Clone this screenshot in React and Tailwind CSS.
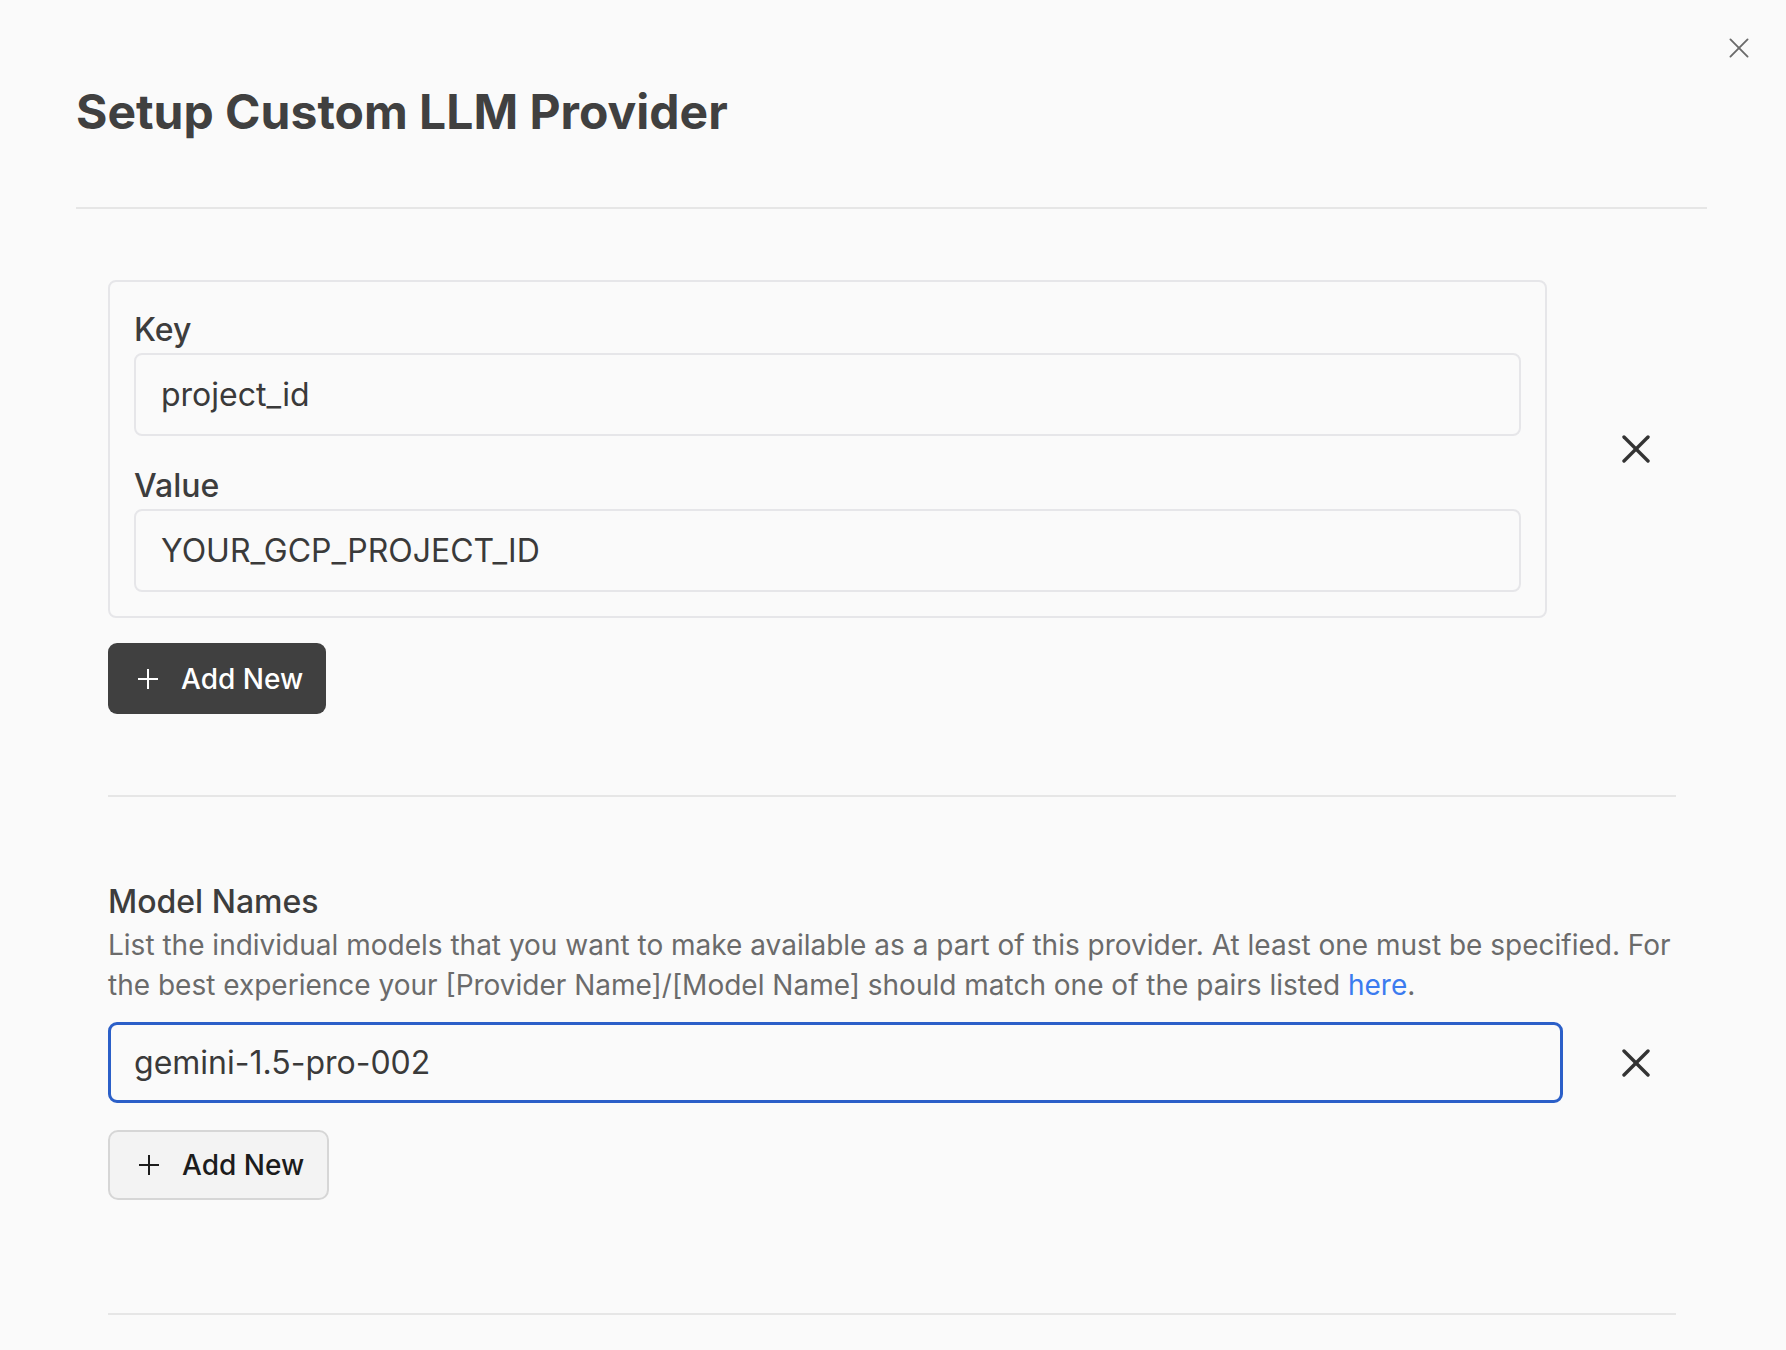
import React, { useState } from "react";

// Small X icon used for removing rows and closing the dialog
function CrossIcon({ size = 28, stroke = 3, className = "" }) {
  return (
    <svg width={size} height={size} viewBox="0 0 28 28" className={className} fill="none">
      <line x1="2" y1="2" x2="26" y2="26" stroke="currentColor" strokeWidth={stroke} strokeLinecap="round" />
      <line x1="26" y1="2" x2="2" y2="26" stroke="currentColor" strokeWidth={stroke} strokeLinecap="round" />
    </svg>
  );
}

function PlusIcon({ className = "" }) {
  return (
    <svg width="22" height="22" viewBox="0 0 22 22" className={className} fill="none">
      <line x1="11" y1="1" x2="11" y2="21" stroke="currentColor" strokeWidth="2" />
      <line x1="1" y1="11" x2="21" y2="11" stroke="currentColor" strokeWidth="2" />
    </svg>
  );
}

function Field({ label, value, className = "" }) {
  return (
    <div className={className}>
      <div className="text-[32px] leading-[40px] font-medium text-[#3d3d3d] mb-[3px]">{label}</div>
      <div className="h-[83px] border-2 border-[#e6e6e9] rounded-[8px] bg-[#fafafa] flex items-center pl-[25px] text-[32px] text-[#3a3a3a]">
        {value}
      </div>
    </div>
  );
}

export default function App() {
  const [pairs] = useState([{ key: "project_id", value: "YOUR_GCP_PROJECT_ID" }]);
  const [models] = useState(["gemini-1.5-pro-002"]);

  return (
    <div
      className="relative min-h-screen bg-[#fafafa] pb-[40px]"
      style={{ fontFamily: "Inter, 'Noto Sans', sans-serif" }}
    >
      {/* close dialog */}
      <button className="absolute left-[1729px] top-[38px] text-[#6a6a6a]">
        <CrossIcon size={20} stroke={2.6} />
      </button>

      {/* Header */}
      <div className="pl-[76px] pt-[88px]">
        <h1 className="text-[48px] leading-[48px] font-bold text-[#404040]">Setup Custom LLM Provider</h1>
      </div>
      <div className="ml-[76px] mt-[71px] w-[1631px] h-[2px] bg-[#e6e6e6]" />

      <div className="pl-[108px]">
        {/* Custom config key/value pairs */}
        {pairs.map((p, i) => (
          <div key={i} className="flex items-center mt-[71px]">
            <div className="w-[1439px] border-2 border-[#e6e6e9] rounded-[8px] pt-[28px] pb-[24px] px-[24px]">
              <Field label="Key" value={p.key} />
              <Field label="Value" value={p.value} className="mt-[30px]" />
            </div>
            <button className="ml-[75px] text-[#333333]">
              <CrossIcon stroke={3.4} />
            </button>
          </div>
        ))}

        <button className="mt-[25px] w-[218px] h-[71px] rounded-[9px] bg-[#404040] text-white flex items-center pl-[29px]">
          <PlusIcon />
          <span className="ml-[22px] text-[28px] font-medium">Add New</span>
        </button>

        <div className="mt-[81px] w-[1568px] h-[2px] bg-[#e6e6e6]" />

        {/* Model names */}
        <div className="mt-[85px] text-[32px] leading-[40px] font-medium text-[#3d3d3d]">Model Names</div>
        <p className="mt-[3px] w-[1568px] text-[28px] leading-[40px] text-[#6b6b6b]">
          List the individual models that you want to make available as a part of this provider. At least one must be
          specified. For the best experience your [Provider Name]/[Model Name] should match one of the pairs listed{" "}
          <a className="text-[#3b7bef]">here</a>.
        </p>

        {models.map((m, i) => (
          <div key={i} className="flex items-center mt-[17px]">
            <div className="w-[1455px] h-[81px] border-[3px] border-[#2b5fc8] rounded-[9px] bg-[#fafafa] flex items-center pl-[23px] text-[32px] text-[#3a3a3a]">
              {m}
            </div>
            <button className="ml-[59px] text-[#333333]">
              <CrossIcon stroke={3.4} />
            </button>
          </div>
        ))}

        <button className="mt-[27px] w-[221px] h-[70px] rounded-[10px] border-2 border-[#d6d6d6] bg-[#f3f3f3] text-[#1c1c1c] flex items-center pl-[28px]">
          <PlusIcon />
          <span className="ml-[22px] text-[28px] font-medium">Add New</span>
        </button>

        <div className="mt-[113px] w-[1568px] h-[2px] bg-[#e6e6e6]" />
      </div>
    </div>
  );
}
